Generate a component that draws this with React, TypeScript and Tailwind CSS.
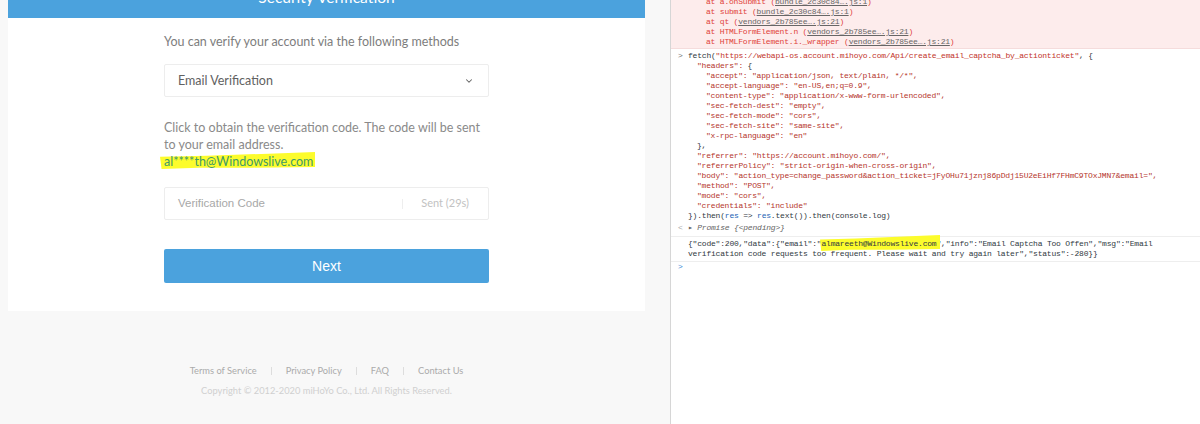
import { ChevronDown } from 'lucide-react';

const stackLines = [
  { text: 'at a.onSubmit (', link: 'bundle_2c30c84….js:1' },
  { text: 'at submit (', link: 'bundle_2c30c84….js:1' },
  { text: 'at qt (', link: 'vendors_2b785ee….js:21' },
  { text: 'at HTMLFormElement.n (', link: 'vendors_2b785ee….js:21' },
  { text: 'at HTMLFormElement.i._wrapper (', link: 'vendors_2b785ee….js:21' },
];

const requestLines = [
  '"accept": "application/json, text/plain, */*",',
  '"accept-language": "en-US,en;q=0.9",',
  '"content-type": "application/x-www-form-urlencoded",',
  '"sec-fetch-dest": "empty",',
  '"sec-fetch-mode": "cors",',
  '"sec-fetch-site": "same-site",',
  '"x-rpc-language": "en"',
];

const optionLines = [
  '"referrer": "https://account.mihoyo.com/",',
  '"referrerPolicy": "strict-origin-when-cross-origin",',
  '"body": "action_type=change_password&action_ticket=jFyOHu71jznj86pDdj15U2eEiHf7FHmC9TOxJMN7&email=",',
  '"method": "POST",',
  '"mode": "cors",',
  '"credentials": "include"',
];

function Highlight({ className }: { className: string }) {
  return (
    <svg className={className} viewBox="0 0 100 100" preserveAspectRatio="none" aria-hidden="true">
      <path d="M0 28 L30 22 L70 10 L100 0 L100 88 L60 92 L25 92 L1 100 Z" fill="#fcfc2c" />
    </svg>
  );
}

function LoginPane() {
  return (
    <div className="flex w-[670px] shrink-0 flex-col bg-[#f8f8f8] pl-2 font-['Lato',sans-serif]">
      <div className="w-[637px] bg-white pb-[28px]">
        <div className="flex h-[18px] items-end justify-center overflow-hidden bg-[#4ba2dd]">
          <span className="mb-[11px] shrink-0 text-[15.5px] leading-[20px] text-white">Security Verification</span>
        </div>
        <div className="ml-[156px] w-[325px] pt-[14px]">
          <p className="text-[12.5px] leading-[20px] text-[#7d7d7d]">You can verify your account via the following methods</p>
          <div className="mt-[12px] flex h-[33px] items-center justify-between rounded-[2px] border border-[#ededed] pt-px pr-[14px] pl-[13px] text-[12.5px] text-[#616161]">
            <span>Email Verification</span>
            <ChevronDown size={10} strokeWidth={2.5} />
          </div>
          <div className="mt-[22px] text-[12.5px] leading-[17px] text-[#8a8a8a]">
            <p>Click to obtain the verification code. The code will be sent to your email address.</p>
            <p className="relative">
              <Highlight className="absolute top-[-1px] left-[-4px] h-[17px] w-[155px]" />
              <span className="relative text-[#3e9a68]">al****th@Windowslive.com</span>
            </p>
          </div>
          <div className="mt-[17px] flex h-[33px] items-center justify-between rounded-[2px] border border-[#ededed] pr-[19px] pl-[13px] font-['Liberation_Sans',sans-serif] text-[11.5px] text-[#a8a8a8]">
            <span>Verification Code</span>
            <div className="flex items-center gap-[18px]">
              <span className="h-[10px] w-px bg-[#eeeeee]" />
              <span className="font-['Lato',sans-serif] text-[11px] text-[#c2c2c2]">Sent (29s)</span>
            </div>
          </div>
          <button className="mt-[29px] block h-[34px] w-full rounded-[2px] bg-[#4ba2dd] font-['Liberation_Sans',sans-serif] text-[14px] text-white">Next</button>
        </div>
      </div>
      <div className="w-[637px] pt-[54px] text-center text-[9.3px] leading-[12px]">
        <div className="flex items-center justify-center text-[#ababab]">
          <span>Terms of Service</span>
          <span className="mx-[14px] h-[8px] w-px bg-[#dddddd]" />
          <span>Privacy Policy</span>
          <span className="mx-[14px] h-[8px] w-px bg-[#dddddd]" />
          <span>FAQ</span>
          <span className="mx-[14px] h-[8px] w-px bg-[#dddddd]" />
          <span>Contact Us</span>
        </div>
        <p className="mt-[8px] text-[#d0d0d0]">Copyright © 2012-2020 miHoYo Co., Ltd. All Rights Reserved.</p>
      </div>
    </div>
  );
}

function ConsolePane() {
  return (
    <div className="min-w-0 flex-1 border-l border-[#d6d6d6] bg-white font-['Liberation_Mono',monospace] text-[8px] leading-[10px] tracking-[-0.2px] whitespace-pre text-[#303942]">
      <div className="h-[49px] overflow-hidden border-b border-[#f5dcdc] bg-[#fdecec] pl-[35px] text-[#e0423a]">
        <div className="mt-[-3px]">
          {stackLines.map((line) => (
            <div key={line.text}>
              {line.text}
              <span className="text-[#666666] underline">{line.link}</span>)
            </div>
          ))}
        </div>
      </div>
      <div className="pt-[2px] pl-[17px]">
        <span className="absolute ml-[-10px] text-[#777777]">&gt;</span>
        <div>fetch(<span className="text-[#c2332a]">"https://webapi-os.account.mihoyo.com/Api/create_email_captcha_by_actionticket"</span>, {'{'}</div>
        <div className="pl-[9px] text-[#b5352c]">"headers": <span className="text-[#303942]">{'{'}</span></div>
        {requestLines.map((line) => (
          <div key={line} className="pl-[18px] text-[#b5352c]">{line}</div>
        ))}
        <div className="pl-[9px]">{'},'}</div>
        {optionLines.map((line) => (
          <div key={line} className="pl-[9px] text-[#b5352c]">{line}</div>
        ))}
        <div>{'}).then('}<span className="text-[#1a5fb4]">res</span>{' => '}<span className="text-[#1a5fb4]">res</span>{'.text()).then(console.log)'}</div>
      </div>
      <div className="mt-[1px] border-b border-[#eeeeee] pb-[2px] pl-[17px] leading-[12px] text-[#666666] italic">
        <span className="absolute ml-[-10px] text-[#aaaaaa] not-italic">&lt;</span>▸ Promise {'{<pending>}'}
      </div>
      <div className="border-b border-[#eeeeee] py-[2px] pl-[17px]">
        <div>
          {'{"code":200,"data":{"email":"'}
          <span className="relative">
            <Highlight className="absolute top-[-4px] left-[-1px] h-[16px] w-[120px]" />
            <span className="relative">almareeth@Windowslive.com</span>
          </span>
          {'","info":"Email Captcha Too Offen","msg":"Email'}
        </div>
        <div>verification code requests too frequent. Please wait and try again later","status":-280{'}}'}</div>
      </div>
      <div className="pl-[7px] text-[#3b8ad8]">&gt;</div>
    </div>
  );
}

export default function App() {
  return (
    <div className="flex h-[424px] w-[1200px] overflow-hidden">
      <LoginPane />
      <ConsolePane />
    </div>
  );
}
